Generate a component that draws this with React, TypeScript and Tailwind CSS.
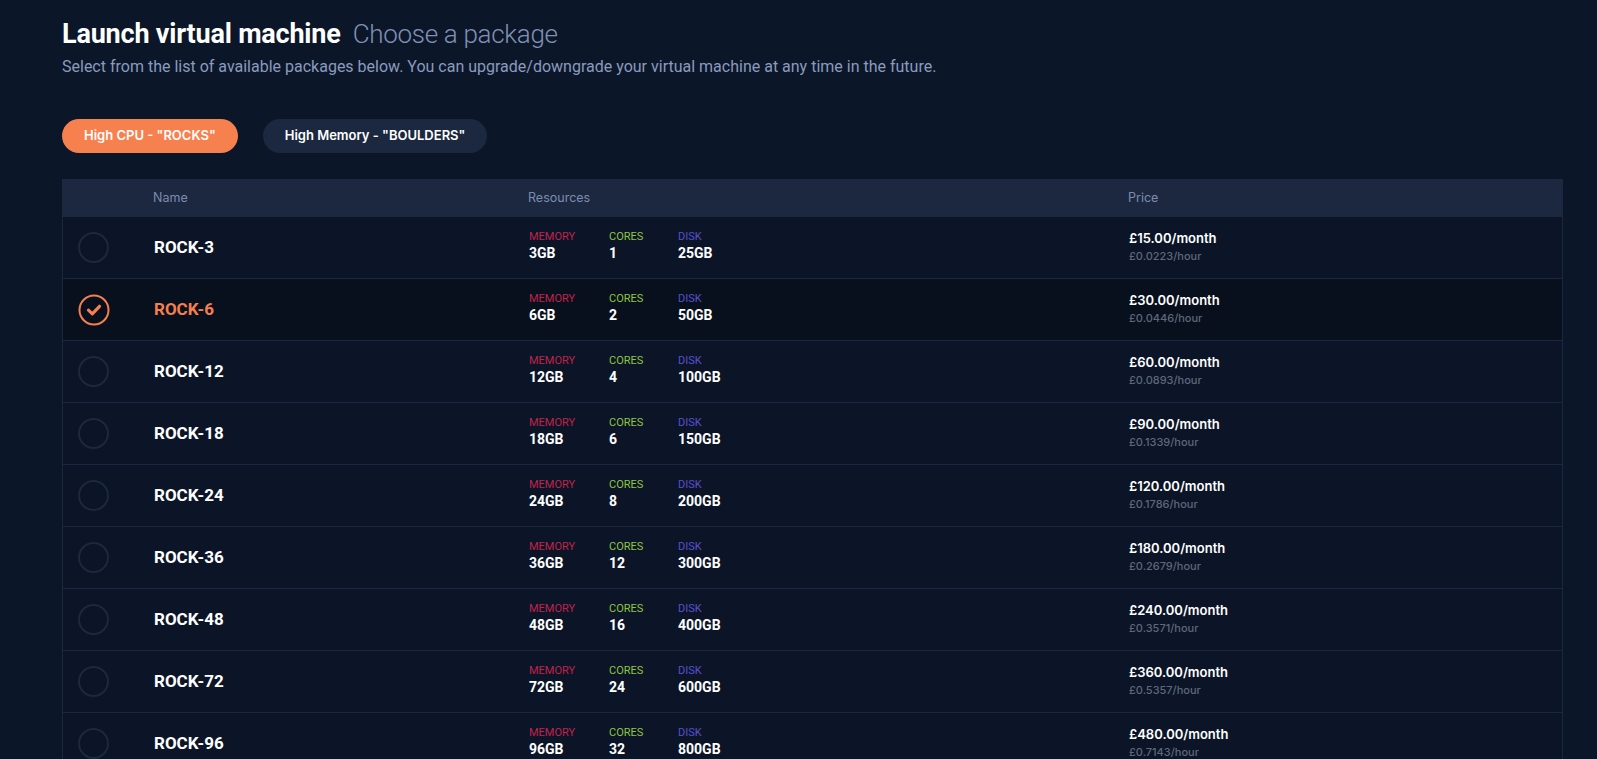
import { useState } from 'react';

interface Pkg {
  name: string;
  memory: string;
  cores: string;
  disk: string;
  month: string;
  hour: string;
}

const rocks: Pkg[] = [
  { name: 'ROCK-3', memory: '3GB', cores: '1', disk: '25GB', month: '£15.00/month', hour: '£0.0223/hour' },
  { name: 'ROCK-6', memory: '6GB', cores: '2', disk: '50GB', month: '£30.00/month', hour: '£0.0446/hour' },
  { name: 'ROCK-12', memory: '12GB', cores: '4', disk: '100GB', month: '£60.00/month', hour: '£0.0893/hour' },
  { name: 'ROCK-18', memory: '18GB', cores: '6', disk: '150GB', month: '£90.00/month', hour: '£0.1339/hour' },
  { name: 'ROCK-24', memory: '24GB', cores: '8', disk: '200GB', month: '£120.00/month', hour: '£0.1786/hour' },
  { name: 'ROCK-36', memory: '36GB', cores: '12', disk: '300GB', month: '£180.00/month', hour: '£0.2679/hour' },
  { name: 'ROCK-48', memory: '48GB', cores: '16', disk: '400GB', month: '£240.00/month', hour: '£0.3571/hour' },
  { name: 'ROCK-72', memory: '72GB', cores: '24', disk: '600GB', month: '£360.00/month', hour: '£0.5357/hour' },
  { name: 'ROCK-96', memory: '96GB', cores: '32', disk: '800GB', month: '£480.00/month', hour: '£0.7143/hour' },
];

function Radio({ checked }: { checked: boolean }) {
  if (!checked) {
    return <div className="w-[31px] h-[31px] rounded-full border-2 border-[#1c283c]" />;
  }
  return (
    <svg width="32" height="32" viewBox="0 0 32 32" fill="none">
      <circle cx="16" cy="16" r="14.5" stroke="#f57f4f" strokeWidth="2" />
      <path d="M10.5 16.2 L14.3 19.8 L21.5 12.3" stroke="#f57f4f" strokeWidth="3.2" strokeLinecap="round" strokeLinejoin="round" />
    </svg>
  );
}

function Resource({ label, value, color, width }: { label: string; value: string; color: string; width: string }) {
  return (
    <div className={`${width} flex flex-col`}>
      <span className={`text-[11px] leading-[14px] ${color}`}>{label}</span>
      <span className="text-[14px] leading-[18px] font-bold text-white">{value}</span>
    </div>
  );
}

export default function App() {
  const [tab, setTab] = useState<'rocks' | 'boulders'>('rocks');
  const [selected, setSelected] = useState('ROCK-6');

  return (
    <div className="min-h-screen bg-[#0c1629] pl-[62px] pr-[34px] pt-[17px] font-['Roboto',sans-serif]">
      <h1 className="flex items-baseline">
        <span className="text-[27px] leading-[34px] font-bold text-white tracking-[-0.2px]">Launch virtual machine</span>
        <span className="ml-[12px] text-[26px] leading-[34px] font-light text-[#8091b3] tracking-[-0.3px]">Choose a package</span>
      </h1>
      <p className="mt-[6px] text-[16px] leading-[20px] text-[#8a9bbd]">
        Select from the list of available packages below. You can upgrade/downgrade your virtual machine at any time in the future.
      </p>

      <div className="mt-[42px] flex gap-[25px] font-['Inter',sans-serif]">
        <button
          onClick={() => setTab('rocks')}
          className={`h-[34px] px-[22px] rounded-full text-[13px] font-semibold text-white ${
            tab === 'rocks' ? 'bg-[#f7804f]' : 'bg-[#1c283f]'
          }`}
        >
          High CPU - "ROCKS"
        </button>
        <button
          onClick={() => setTab('boulders')}
          className={`h-[34px] px-[22px] rounded-full text-[13px] font-semibold text-white ${
            tab === 'boulders' ? 'bg-[#f7804f]' : 'bg-[#1c283f]'
          }`}
        >
          High Memory - "BOULDERS"
        </button>
      </div>

      <div className="mt-[26px]">
        <div className="grid grid-cols-[91px_375px_600px_1fr] h-[38px] items-center bg-[#1c2840] font-['Inter',sans-serif] text-[12.5px] text-[#7b8cae]">
          <div />
          <div>Name</div>
          <div>Resources</div>
          <div>Price</div>
        </div>
        {rocks.map((p) => {
          const isSel = p.name === selected;
          return (
            <div
              key={p.name}
              onClick={() => setSelected(p.name)}
              className={`grid grid-cols-[91px_375px_600px_1fr] h-[62px] items-center border-x border-b border-[#1b2740] cursor-pointer ${
                isSel ? 'bg-[#08101d]' : 'bg-[#0b1527]'
              }`}
            >
              <div className="pl-[15px] flex items-center">
                <Radio checked={isSel} />
              </div>
              <div className={`text-[17px] font-bold ${isSel ? 'text-[#f57f4f]' : 'text-white'}`}>{p.name}</div>
              <div className="flex -mt-[3px]">
                <Resource label="MEMORY" value={p.memory} color="text-[#c1224b]" width="w-[80px]" />
                <Resource label="CORES" value={p.cores} color="text-[#8fc440]" width="w-[69px]" />
                <Resource label="DISK" value={p.disk} color="text-[#5a4fcf]" width="w-[80px]" />
              </div>
              <div className="flex flex-col -mt-[3px] font-['Inter',sans-serif]">
                <span className="text-[13px] leading-[18px] font-semibold text-white">{p.month}</span>
                <span className="mt-[2px] text-[11px] leading-[14px] font-medium text-[#5e687b]">{p.hour}</span>
              </div>
            </div>
          );
        })}
      </div>
    </div>
  );
}
